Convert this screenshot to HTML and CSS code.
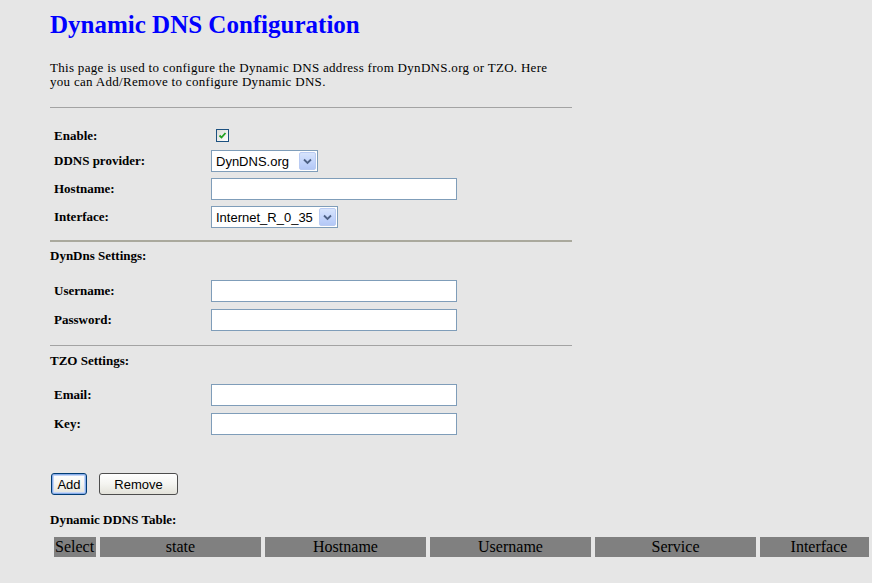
FILE: index.html
```html
<!DOCTYPE html>
<html>
<head>
<meta charset="utf-8">
<title>Dynamic DNS Configuration</title>
<link rel="stylesheet" href="styles.css">
</head>
<body>
<div class="page">
  <h1 class="title">Dynamic DNS Configuration</h1>
  <p class="desc">This page is used to configure the Dynamic DNS address from DynDNS.org or TZO. Here you can Add/Remove to configure Dynamic DNS.</p>
  <div class="rule"></div>

  <div class="form form-main">
    <div class="label row-short">Enable:</div>
    <div class="ctrl row-short"><span class="checkbox"><svg width="9" height="9" viewBox="0 0 9 9"><path d="M1.5 4.5 L3.5 6.5 L7.5 2" fill="none" stroke="#21a121" stroke-width="1.8"/></svg></span></div>
    <div class="label">DDNS provider:</div>
    <div class="ctrl"><span class="select sel-provider"><span class="sel-value">DynDNS.org</span><span class="sel-arrow"><svg width="9" height="7" viewBox="0 0 9 7"><path d="M1 1.5 L4.5 5 L8 1.5" fill="none" stroke="#4d6185" stroke-width="1.8"/></svg></span></span></div>
    <div class="label">Hostname:</div>
    <div class="ctrl"><span class="textbox"></span></div>
    <div class="label">Interface:</div>
    <div class="ctrl"><span class="select sel-iface"><span class="sel-value">Internet_R_0_35</span><span class="sel-arrow"><svg width="9" height="7" viewBox="0 0 9 7"><path d="M1 1.5 L4.5 5 L8 1.5" fill="none" stroke="#4d6185" stroke-width="1.8"/></svg></span></span></div>
  </div>

  <div class="rule rule-thick"></div>
  <div class="section-head head-dyn">DynDns Settings:</div>
  <div class="form form-sub form-dyn">
    <div class="label">Username:</div>
    <div class="ctrl"><span class="textbox"></span></div>
    <div class="label">Password:</div>
    <div class="ctrl"><span class="textbox"></span></div>
  </div>

  <div class="rule rule-mid"></div>
  <div class="section-head head-tzo">TZO Settings:</div>
  <div class="form form-sub form-tzo">
    <div class="label">Email:</div>
    <div class="ctrl"><span class="textbox"></span></div>
    <div class="label">Key:</div>
    <div class="ctrl"><span class="textbox"></span></div>
  </div>

  <div class="buttons">
    <button class="btn btn-default">Add</button>
    <button class="btn btn-remove">Remove</button>
  </div>

  <div class="section-head head-table">Dynamic DDNS Table:</div>
  <table class="ddns-table">
    <tr>
      <th class="c-select">Select</th>
      <th class="c-wide">state</th>
      <th class="c-wide">Hostname</th>
      <th class="c-wide">Username</th>
      <th class="c-wide">Service</th>
      <th class="c-last">Interface</th>
    </tr>
  </table>
</div>
</body>
</html>
```
FILE: styles.css
```css
html, body {
  margin: 0;
  padding: 0;
  background: #e6e6e6;
  overflow: hidden;
}
.page {
  padding-left: 50px;
  font-family: "Liberation Serif", "Times New Roman", serif;
  color: #000;
}
.title {
  margin: 11px 0 0;
  font-size: 25px;
  line-height: 28px;
  font-weight: bold;
  color: #0000ff;
}
.desc {
  margin: 22px 0 0;
  width: 515px;
  font-size: 13px;
  letter-spacing: 0.3px;
  line-height: 14px;
}
.rule {
  width: 522px;
  height: 1px;
  background: #a3a3a3;
  margin-top: 18px;
}
.rule-thick {
  height: 2px;
  background: #aaa99d;
  margin-top: 12px;
}
.rule-mid {
  margin-top: 14px;
}
.form {
  display: grid;
  grid-template-columns: 161px 246px;
  grid-auto-rows: 22px;
  align-items: center;
}
.form-main {
  margin-top: 19px;
  grid-template-rows: 17px;
  row-gap: 6px;
}
.form-sub {
  row-gap: 7px;
  margin-top: 17px;
}
.form-tzo {
  margin-top: 16px;
}
.label {
  padding-left: 4px;
  font-size: 13px;
  font-weight: bold;
  line-height: 14px;
}
.ctrl {
  display: flex;
  align-items: center;
  height: 100%;
}
.checkbox {
  display: inline-flex;
  align-items: center;
  justify-content: center;
  width: 11px;
  height: 11px;
  margin-left: 5px;
  border: 1px solid #1c5180;
  background: linear-gradient(135deg, #dcdcd7, #ffffff);
}
.textbox {
  display: block;
  box-sizing: border-box;
  width: 246px;
  height: 22px;
  border: 1px solid #7f9db9;
  background: #fff;
}
.select {
  display: inline-flex;
  align-items: center;
  box-sizing: border-box;
  height: 22px;
  border: 1px solid #7f9db9;
  background: #fff;
  font-family: "Liberation Sans", Arial, sans-serif;
  font-size: 13px;
  padding: 1px;
}
.sel-provider { width: 107px; }
.sel-iface { width: 127px; }
.sel-value {
  flex: 1;
  padding-left: 3px;
  white-space: nowrap;
}
.sel-arrow {
  display: inline-flex;
  align-items: center;
  justify-content: center;
  box-sizing: border-box;
  width: 17px;
  height: 18px;
  border: 1px solid #b9cbf3;
  border-radius: 2px;
  background: linear-gradient(180deg, #d7e4fc 0%, #c1d3fb 60%, #b4c8f6 100%);
}
.section-head {
  font-size: 13px;
  font-weight: bold;
  line-height: 14px;
}
.head-dyn { margin-top: 7px; }
.head-tzo { margin-top: 8px; }
.head-table { margin-top: 18px; }
.buttons {
  display: flex;
  gap: 12px;
  margin-top: 38px;
  padding-left: 1px;
}
.btn {
  box-sizing: border-box;
  height: 22px;
  padding: 0;
  font-family: "Liberation Sans", Arial, sans-serif;
  font-size: 13px;
  color: #000;
  border: 1px solid #003c74;
  border-radius: 3px;
  background: linear-gradient(180deg, #ffffff 0%, #f4f4f0 50%, #e3e2da 100%);
}
.btn-default {
  width: 36px;
  box-shadow: inset 0 0 0 1px #89adea, inset 0 0 0 2px #c2d5f6;
}
.btn-remove {
  width: 79px;
  border-color: #4d4d4d;
}
.ddns-table {
  margin-top: 6px;
  border-spacing: 4px;
  width: 822px;
  table-layout: fixed;
  font-size: 16px;
}
.ddns-table th {
  background: #808080;
  font-weight: normal;
  height: 20px;
  padding: 0 1px;
  box-sizing: border-box;
  line-height: 18px;
  white-space: nowrap;
  overflow: hidden;
}
.c-select { width: 42px; text-align: left; }
.c-wide { width: 161px; text-align: center; }
.ddns-table th.c-last { width: 109px; text-align: center; padding-left: 10px; }
```
